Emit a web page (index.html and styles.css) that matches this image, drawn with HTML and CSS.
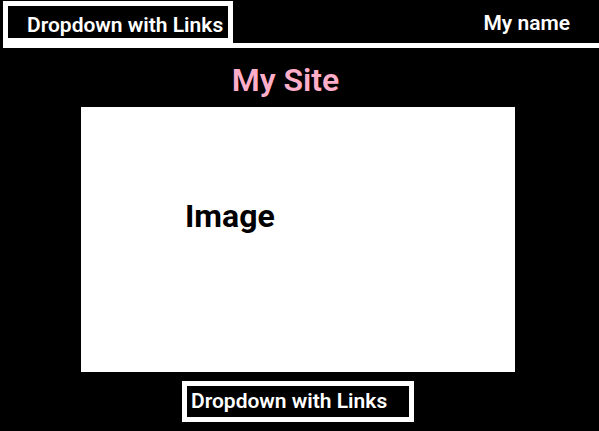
FILE: index.html
```html
<!DOCTYPE html>
<html lang="en">
<head>
<meta charset="utf-8">
<meta name="viewport" content="width=device-width, initial-scale=1">
<title>My Site</title>
<link rel="stylesheet" href="styles.css">
</head>
<body>
<header class="topbar">
  <select class="dropdown dropdown-top" aria-label="Site links">
    <option>Dropdown with Links</option>
  </select>
  <span class="owner">My name</span>
</header>
<main class="content">
  <h1 class="title">My Site</h1>
  <div class="picture">Image</div>
  <select class="dropdown dropdown-bottom" aria-label="More links">
    <option>Dropdown with Links</option>
  </select>
</main>
</body>
</html>
```

FILE: styles.css
```css
* {
  box-sizing: border-box;
}

body {
  margin: 0;
  background: #000;
  color: #fff;
  font-family: Roboto, "Liberation Sans", sans-serif;
  font-size: 21px;
  font-weight: 600;
  line-height: 24px;
}

.topbar {
  display: flex;
  justify-content: space-between;
  align-items: center;
  margin-left: 3px;
  padding-top: 1px;
  border-bottom: 5px solid #fff;
}

.dropdown {
  appearance: none;
  margin: 0;
  border: 5px solid #fff;
  border-radius: 0;
  background: #000;
  color: inherit;
  font: inherit;
}

.dropdown-top {
  width: 230px;
  height: 42px;
  padding: 6px 0 0 19px;
}

.dropdown-bottom {
  width: 232px;
  height: 41px;
  margin-top: 9px;
  padding: 0 4px 2px;
}

.owner {
  padding: 2px 29px 0 0;
}

.content {
  display: flex;
  flex-direction: column;
  align-items: center;
  padding: 12px 3px 8px 0;
}

.title {
  margin: 0 0 7px;
  padding-right: 25px;
  color: #ffaec9;
  font-size: 32px;
  font-weight: 600;
  line-height: 40px;
}

.picture {
  width: 100%;
  max-width: 434px;
  min-height: 265px;
  padding: 89px 104px;
  background: #fff;
  color: #000;
  font-size: 32px;
  font-weight: 700;
  line-height: 40px;
}
```
